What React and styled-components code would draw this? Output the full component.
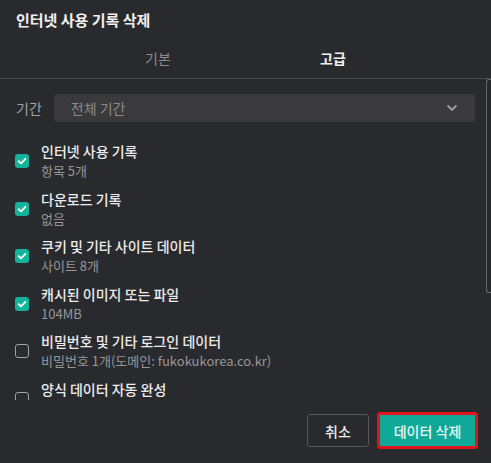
import React from 'react';
import styled, { createGlobalStyle } from 'styled-components';

const GlobalStyle = createGlobalStyle`
  html, body {
    margin: 0;
    padding: 0;
    background: #292a2d;
  }
  body {
    font-family: "Noto Sans CJK KR", "Noto Sans", sans-serif;
  }
  * { box-sizing: border-box; }
`;

const Dialog = styled.div`
  width: 491px;
  height: 463px;
  background: #292a2d;
  display: flex;
  flex-direction: column;
  color: #e8e8e8;
`;

const Title = styled.h1`
  margin: 0;
  height: 40px;
  padding-left: 16px;
  display: flex;
  align-items: center;
  font-size: 15px;
  font-weight: 700;
  color: #f1f1f1;
  line-height: 20px;
`;

const Tabs = styled.div`
  display: flex;
  justify-content: center;
  height: 39px;
  border-bottom: 1px solid #4a4b4f;
`;

const Tab = styled.div`
  width: 175px;
  display: flex;
  justify-content: center;
  align-items: center;
  padding-bottom: 2px;
  font-size: 14px;
  font-weight: ${p => (p.active ? 700 : 400)};
  color: ${p => (p.active ? '#f2f2f2' : '#8c8c8e')};
`;

const Scroller = styled.div`
  position: relative;
  flex: 1;
  min-height: 0;
`;

const Body = styled.div`
  height: 100%;
  overflow: hidden;
  padding: 15px 16px 0 0;
`;

const Thumb = styled.div`
  position: absolute;
  top: 0;
  right: 0;
  width: 5px;
  height: 214px;
  border: 1px solid #67686c;
  border-right: none;
  border-radius: 3px 0 0 3px;
  background: #26272a;
`;

const PeriodRow = styled.div`
  display: flex;
  align-items: center;
  gap: 12px;
  padding-left: 16px;
  margin-bottom: 19px;
`;

const Label = styled.span`
  font-size: 14px;
  color: #a3a3a5;
  line-height: 20px;
`;

const Select = styled.div`
  flex: 1;
  height: 28px;
  background: #3a3a3c;
  border-radius: 3px;
  display: flex;
  align-items: center;
  justify-content: space-between;
  padding: 0 17px;
  font-size: 14px;
  color: #8a8a8c;
`;

const Item = styled.div`
  display: flex;
  align-items: center;
  gap: 12px;
  padding-left: 15px;
  margin-bottom: 7.6px;
`;

const Box = styled.span`
  width: 14px;
  height: 14px;
  flex: none;
  border-radius: 3px;
  display: flex;
  align-items: center;
  justify-content: center;
  background: ${p => (p.checked ? '#14b49b' : 'transparent')};
  border: ${p => (p.checked ? 'none' : '1.5px solid #a3a3a5')};
`;

const Texts = styled.div`
  display: flex;
  flex-direction: column;
`;

const ItemTitle = styled.span`
  font-size: 14px;
  line-height: 20px;
  font-weight: 500;
  color: #ececec;
`;

const ItemSub = styled.span`
  font-size: 13px;
  line-height: 20px;
  color: #97979a;
  white-space: nowrap;
`;

const Footer = styled.div`
  height: 63px;
  display: flex;
  justify-content: flex-end;
  align-items: center;
  gap: 8px;
  padding: 0 13px 2px 0;
`;

const Button = styled.button`
  height: ${p => (p.primary ? '37px' : '33px')};
  width: ${p => (p.primary ? '101px' : '62px')};
  padding: 0;
  border-radius: 3px;
  font-family: inherit;
  font-size: 14px;
  font-weight: 500;
  color: ${p => (p.primary ? '#eaf8f5' : '#ececec')};
  background: ${p => (p.primary ? '#10a897' : 'transparent')};
  border: ${p => (p.primary ? '3px solid #e0141a' : '1px solid #56575b')};
  outline: none;
`;

const Check = () => (
  <svg width="10" height="10" viewBox="0 0 10 10">
    <path d="M1.6 5.2 L4 7.4 L8.4 2.8" fill="none" stroke="#ffffff" strokeWidth="1.8" strokeLinecap="round" strokeLinejoin="round" />
  </svg>
);

const Chevron = () => (
  <svg width="12" height="8" viewBox="0 0 12 8">
    <path d="M1.5 1.5 L6 5.8 L10.5 1.5" fill="none" stroke="#9a9a9c" strokeWidth="2" />
  </svg>
);

const items = [
  { title: '인터넷 사용 기록', sub: '항목 5개', checked: true },
  { title: '다운로드 기록', sub: '없음', checked: true },
  { title: '쿠키 및 기타 사이트 데이터', sub: '사이트 8개', checked: true },
  { title: '캐시된 이미지 또는 파일', sub: '104MB', checked: true },
  { title: '비밀번호 및 기타 로그인 데이터', sub: '비밀번호 1개(도메인: fukokukorea.co.kr)', checked: false },
  { title: '양식 데이터 자동 완성', sub: '없음', checked: false },
];

export default function App() {
  return (
    <>
      <GlobalStyle />
      <Dialog>
        <Title>인터넷 사용 기록 삭제</Title>
        <Tabs>
          <Tab>기본</Tab>
          <Tab active>고급</Tab>
        </Tabs>
        <Scroller>
          <Body>
            <PeriodRow>
              <Label>기간</Label>
              <Select>
                <span>전체 기간</span>
                <Chevron />
              </Select>
            </PeriodRow>
            {items.map(it => (
              <Item key={it.title}>
                <Box checked={it.checked}>{it.checked && <Check />}</Box>
                <Texts>
                  <ItemTitle>{it.title}</ItemTitle>
                  <ItemSub>{it.sub}</ItemSub>
                </Texts>
              </Item>
            ))}
          </Body>
          <Thumb />
        </Scroller>
        <Footer>
          <Button>취소</Button>
          <Button primary>데이터 삭제</Button>
        </Footer>
      </Dialog>
    </>
  );
}
